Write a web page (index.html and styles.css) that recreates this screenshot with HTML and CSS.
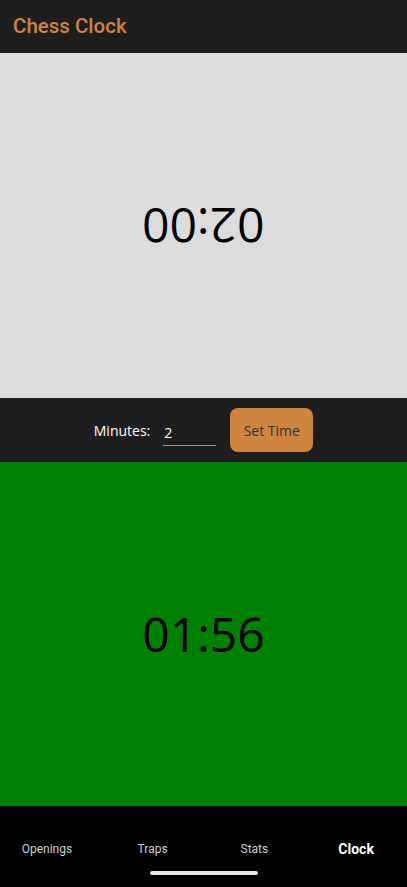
FILE: index.html
```html
<!DOCTYPE html>
<html>
<head>
<meta charset="utf-8">
<link rel="stylesheet" href="styles.css">
</head>
<body>
<div class="app">
  <header class="header"><h1 class="title">Chess Clock</h1></header>
  <section class="clock clock-top"><span class="time flipped">02:00</span></section>
  <section class="controls">
    <span class="label">Minutes:</span>
    <span class="input">2</span>
    <button class="btn">Set Time</button>
  </section>
  <section class="clock clock-bottom"><span class="time">01:56</span></section>
  <nav class="tabs">
    <div class="tab-row">
      <span class="tab">Openings</span>
      <span class="tab">Traps</span>
      <span class="tab">Stats</span>
      <span class="tab active">Clock</span>
    </div>
    <div class="home-indicator"></div>
  </nav>
</div>
</body>
</html>
```
FILE: styles.css
```css
* { box-sizing: border-box; margin: 0; padding: 0; }
html, body { width: 407px; height: 887px; background: #000; overflow: hidden; }
.app { display: flex; flex-direction: column; height: 887px; font-family: "Open Sans", "Noto Sans", sans-serif; }
.header { height: 53px; background: #1e1e1e; display: flex; align-items: center; padding-left: 13px; }
.title { font-family: Roboto, sans-serif; font-weight: 500; font-size: 20.5px; color: #cd853f; padding-bottom: 2px; }
.clock { display: flex; align-items: center; justify-content: center; }
.clock-top { height: 345px; background: #dcdcdc; }
.clock-bottom { height: 344px; background: #008000; }
.time { font-family: "Open Sans", "Noto Sans", sans-serif; font-size: 48px; color: #000; line-height: 1; }
.flipped { transform: rotate(180deg); }
.controls { height: 64px; background: #1e1e1e; display: flex; align-items: center; justify-content: center; }
.label { color: #fff; font-size: 14px; margin-right: 13px; }
.input { width: 53px; color: #fff; font-size: 14px; border-bottom: 1px solid #999; padding: 0 0 3px 1px; margin-top: 8px; margin-right: 14px; }
.btn { width: 83px; height: 44px; background: #cd853f; border: none; border-radius: 8px; color: #333; font-family: "Open Sans", "Noto Sans", sans-serif; font-size: 14px; }
.tabs { height: 81px; background: #000; display: flex; flex-direction: column; align-items: center; }
.tab-row { display: grid; grid-template-columns: repeat(4, 1fr); width: 100%; margin-top: 35px; }
.tab { font-family: Roboto, sans-serif; font-size: 12px; color: #cfcfcf; text-align: center; line-height: 16px; }
.tab.active { font-weight: 700; font-size: 14px; color: #fff; }
.tab:nth-child(1) { padding-right: 8px; }
.home-indicator { width: 108px; height: 4px; border-radius: 2px; background: #e6e6e6; margin-top: 14px; }
```
